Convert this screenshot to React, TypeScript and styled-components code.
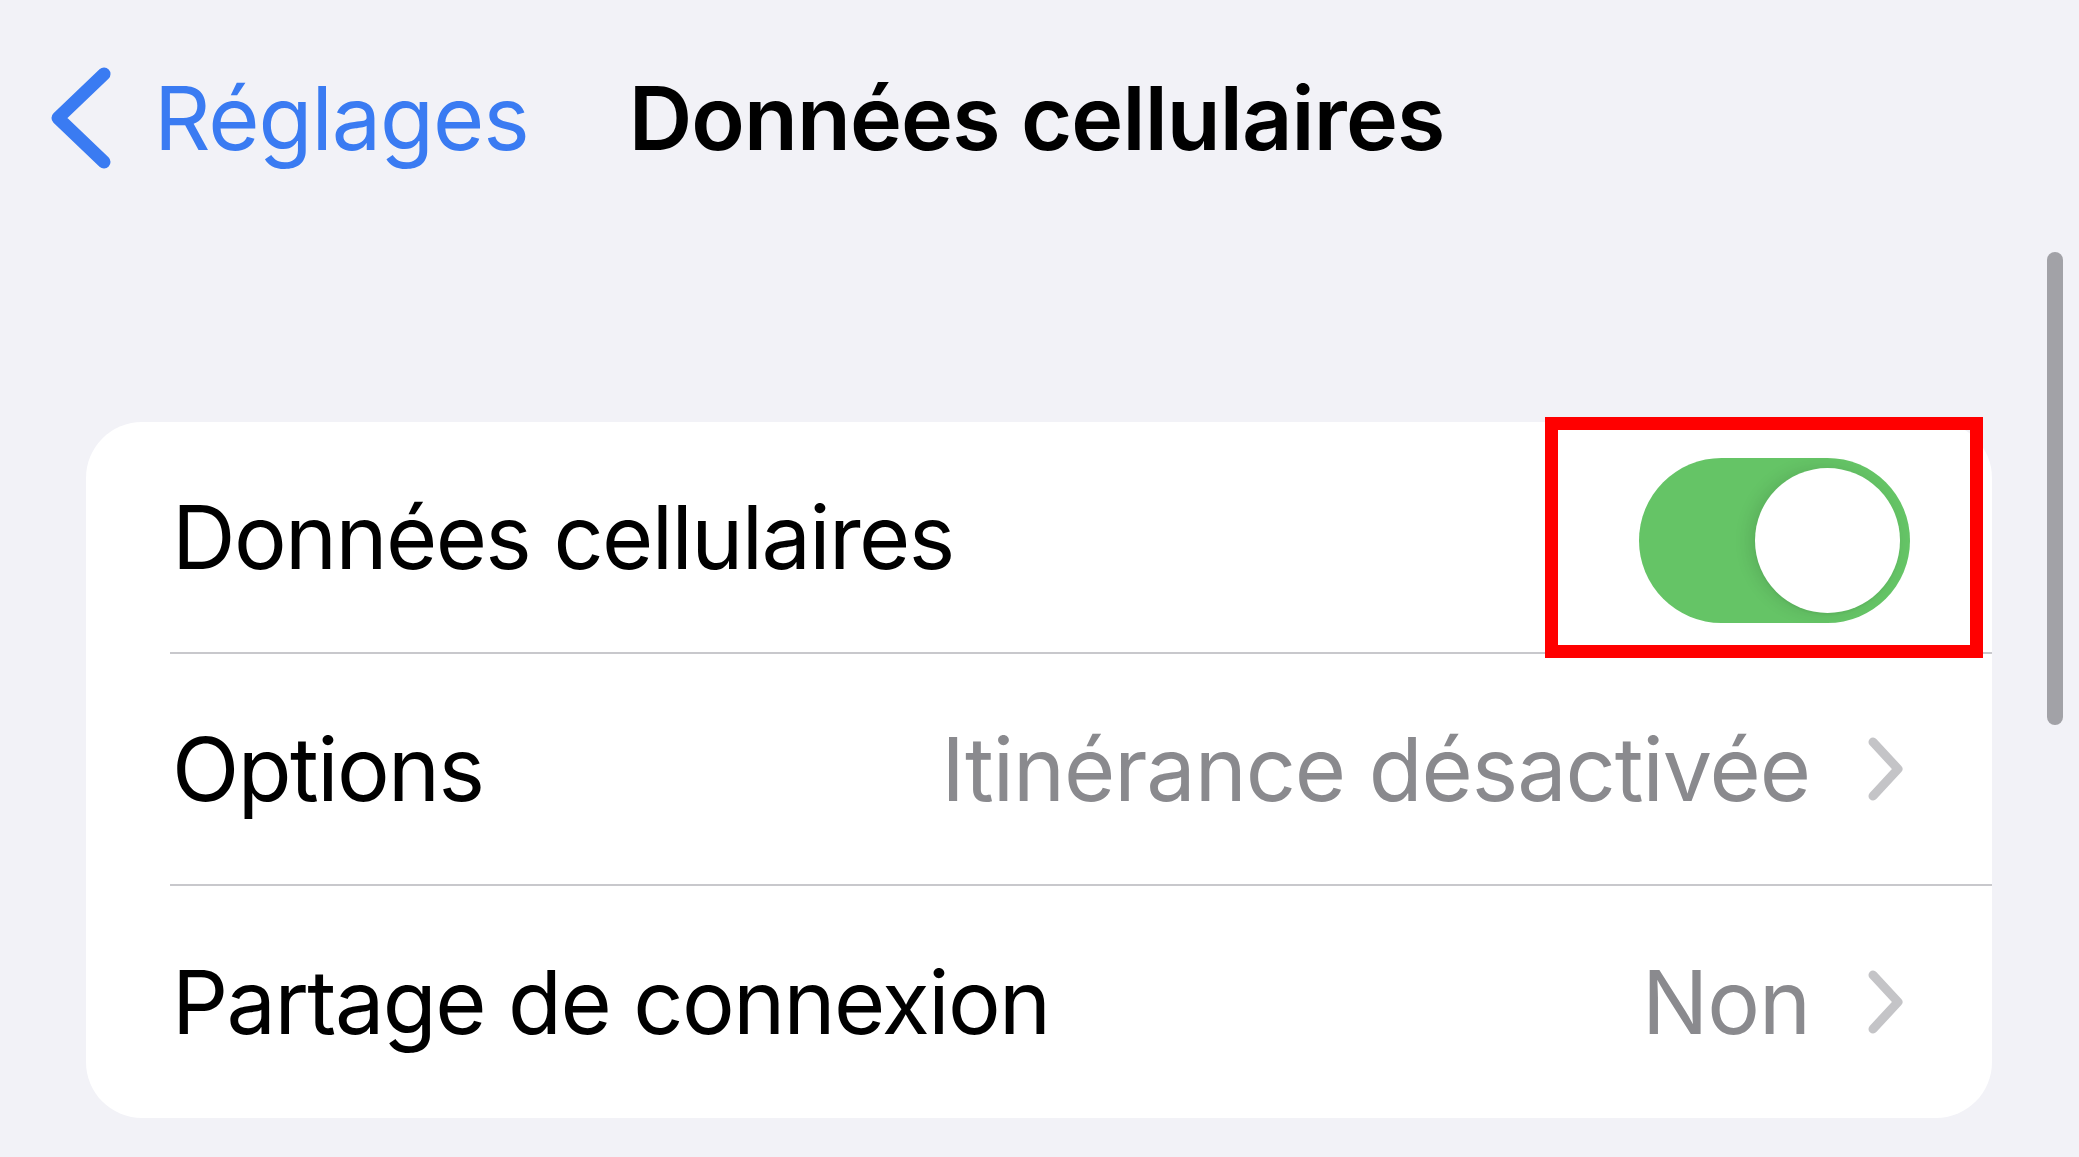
import React from 'react';
import styled, { createGlobalStyle } from 'styled-components';

const GlobalStyle = createGlobalStyle`
  html, body {
    margin: 0;
    padding: 0;
    background: #f2f2f7;
  }
  body {
    font-family: Inter, "Noto Sans", "Liberation Sans", sans-serif;
    -webkit-font-smoothing: antialiased;
  }
`;

const Page = styled.div`
  position: relative;
  width: 2079px;
  height: 1157px;
  overflow: hidden;
  background: #f2f2f7;
`;

const NavBar = styled.div`
  display: flex;
  flex-direction: row;
  align-items: center;
  height: 236px;
  padding-left: 48px;
  box-sizing: border-box;
`;

const BackButton = styled.div`
  display: flex;
  flex-direction: row;
  align-items: center;
  gap: 42px;
  color: #3a7bf2;
`;

const BackLabel = styled.span`
  font-size: 88px;
  line-height: 1;
  letter-spacing: -0.012em;
  font-weight: 400;
`;

const Title = styled.h1`
  margin: 0 0 0 100px;
  font-size: 88px;
  line-height: 1;
  letter-spacing: -0.01em;
  font-weight: 600;
  color: #000;
`;

const Content = styled.div`
  padding: 186px 87px 0 86px;
`;

const Card = styled.div`
  background: #fff;
  border-radius: 56px;
  padding-left: 84px;
`;

const Row = styled.div<{ $last?: boolean }>`
  display: flex;
  flex-direction: row;
  align-items: center;
  justify-content: space-between;
  height: 232px;
  box-sizing: border-box;
  padding-right: 86px;
  border-bottom: ${(p) => (p.$last ? 'none' : '2px solid #c8c8cc')};
`;

const Label = styled.span`
  font-size: 88px;
  line-height: 1;
  letter-spacing: -0.018em;
  color: #000;
  padding-left: 2px;
`;

const Detail = styled.div`
  display: flex;
  flex-direction: row;
  align-items: center;
  gap: 56px;
`;

const Value = styled.span`
  font-size: 88px;
  line-height: 1;
  letter-spacing: -0.012em;
  color: #8a8a8e;
`;

const ToggleWrap = styled.div`
  position: relative;
  margin: 6px -4px 0 0;
`;

const Switch = styled.div<{ $on: boolean }>`
  position: relative;
  width: 271px;
  height: 165px;
  border-radius: 83px;
  background: ${(p) => (p.$on ? '#65c466' : '#e9e9eb')};
`;

const Knob = styled.div<{ $on: boolean }>`
  position: absolute;
  top: 10px;
  ${(p) => (p.$on ? 'right: 10px;' : 'left: 10px;')}
  width: 145px;
  height: 145px;
  border-radius: 50%;
  background: #fff;
  box-shadow: -6px 0 16px rgba(0, 0, 0, 0.1), 0 2px 2px rgba(0, 0, 0, 0.04);
`;

const Highlight = styled.div`
  position: absolute;
  top: -41px;
  left: -94px;
  right: -73px;
  bottom: -35px;
  border: 13px solid #ff0000;
  pointer-events: none;
`;

const ScrollIndicator = styled.div`
  position: absolute;
  top: 252px;
  left: 2047px;
  width: 16px;
  height: 473px;
  border-radius: 8px;
  background: #a2a2a7;
`;

const BackChevron = () => (
  <svg width="64" height="104" viewBox="0 0 64 104" fill="none">
    <path
      d="M56 8 L10 52 L56 96"
      stroke="#3a7bf2"
      strokeWidth="13"
      strokeLinecap="round"
      strokeLinejoin="round"
    />
  </svg>
);

const Disclosure = () => (
  <svg width="40" height="66" viewBox="0 0 40 66" fill="none">
    <path
      d="M7 6 L32 33 L7 60"
      stroke="#c4c4c7"
      strokeWidth="9"
      strokeLinecap="round"
      strokeLinejoin="round"
    />
  </svg>
);

const App: React.FC = () => {
  return (
    <Page>
      <GlobalStyle />
      <NavBar>
        <BackButton>
          <BackChevron />
          <BackLabel>Réglages</BackLabel>
        </BackButton>
        <Title>Données cellulaires</Title>
      </NavBar>

      <Content>
        <Card>
          <Row>
            <Label>Données cellulaires</Label>
            <ToggleWrap>
              <Switch $on>
                <Knob $on />
              </Switch>
              <Highlight />
            </ToggleWrap>
          </Row>
          <Row>
            <Label>Options</Label>
            <Detail>
              <Value>Itinérance désactivée</Value>
              <Disclosure />
            </Detail>
          </Row>
          <Row $last>
            <Label>Partage de connexion</Label>
            <Detail>
              <Value>Non</Value>
              <Disclosure />
            </Detail>
          </Row>
        </Card>
      </Content>

      <ScrollIndicator />
    </Page>
  );
};

export default App;
